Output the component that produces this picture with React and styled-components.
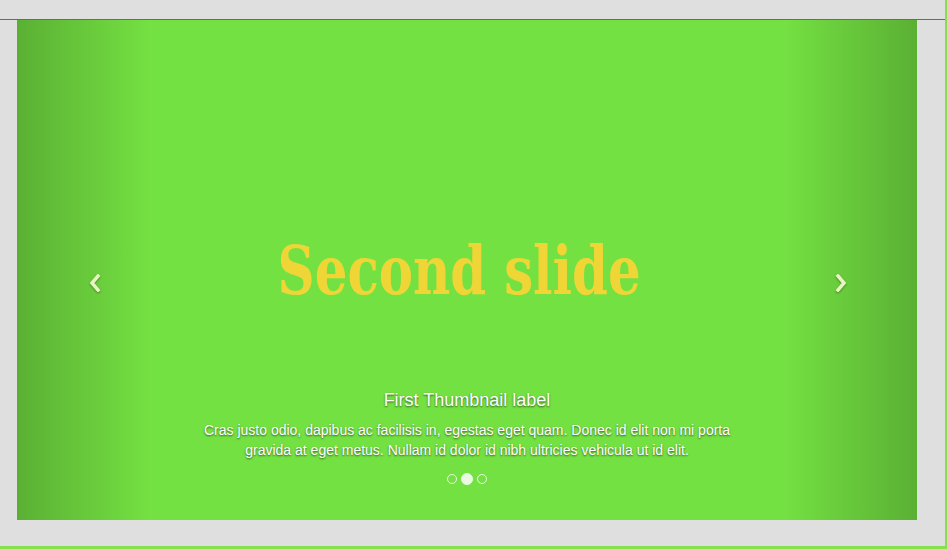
import React from "react";
import styled, { createGlobalStyle } from "styled-components";

const GlobalStyle = createGlobalStyle`
  html, body {
    margin: 0;
    padding: 0;
    background: #dfdfdf;
    font-family: "Liberation Sans", Arial, sans-serif;
  }
`;

const Page = styled.div`
  height: 546px;
  width: 945px;
  border-right: 2px solid #86e04e;
  border-bottom: 3px solid #86e04e;
`;

const TopBar = styled.div`
  height: 19px;
  border-bottom: 1px solid #6a6a6a;
`;

const Carousel = styled.div`
  position: relative;
  margin-left: 17px;
  width: 900px;
  height: 500px;
  background: #74e142;
  overflow: hidden;
  display: flex;
  align-items: center;
  justify-content: center;
`;

const Heading = styled.h1`
  margin: 0 16px 0 0;
  font-family: "DejaVu Serif Condensed", "DejaVu Serif", serif;
  font-weight: bold;
  font-size: 68px;
  color: #efd636;
  line-height: 1;
  transform: scaleX(0.84);
`;

const Control = styled.a`
  position: absolute;
  top: 0;
  bottom: 0;
  width: 15%;
  ${(p) => (p.$side === "left" ? "left: 0;" : "right: 0;")}
  background-image: linear-gradient(
    ${(p) => (p.$side === "left" ? "to right" : "to left")},
    rgba(0, 0, 0, 0.22) 0,
    rgba(0, 0, 0, 0.0001) 100%
  );
  display: flex;
  align-items: center;
  justify-content: ${(p) => (p.$side === "left" ? "flex-start" : "flex-end")};
  ${(p) => (p.$side === "left" ? "padding-left: 72px;" : "padding-right: 70px;")}
  box-sizing: border-box;
`;

const Chevron = styled.svg`
  width: 12px;
  height: 18px;
  margin-top: 26px;
  filter: drop-shadow(0 1px 1px rgba(0, 0, 0, 0.35));
`;

const Caption = styled.div`
  position: absolute;
  left: 20%;
  right: 20%;
  bottom: 20px;
  padding-bottom: 40px;
  text-align: center;
  color: #fff;
  text-shadow: 0 1px 2px rgba(0, 0, 0, 0.6);
`;

const CaptionTitle = styled.h3`
  margin: 0 0 9px;
  font-size: 18px;
  font-weight: normal;
  line-height: 22px;
`;

const CaptionText = styled.p`
  margin: 0;
  font-size: 14px;
  line-height: 20px;
`;

const Indicators = styled.ol`
  position: absolute;
  left: 0;
  right: 0;
  bottom: 35px;
  margin: 0;
  padding: 0;
  list-style: none;
  display: flex;
  align-items: center;
  justify-content: center;
  gap: 4px;
`;

const Dot = styled.li`
  box-sizing: border-box;
  width: ${(p) => (p.$active ? "12px" : "10px")};
  height: ${(p) => (p.$active ? "12px" : "10px")};
  border-radius: 50%;
  border: 1px solid #fff;
  background: ${(p) => (p.$active ? "#fff" : "transparent")};
  opacity: 0.85;
`;

const ChevronIcon = ({ left }) => (
  <Chevron viewBox="0 0 12 18">
    <path
      d={left ? "M9 2 L3 9 L9 16" : "M3 2 L9 9 L3 16"}
      fill="none"
      stroke="#e9f5c0"
      strokeWidth="3.5"
      strokeLinecap="square"
    />
  </Chevron>
);

export default function App() {
  return (
    <>
      <GlobalStyle />
      <Page>
        <TopBar />
        <Carousel>
          <Heading>Second slide</Heading>
          <Control $side="left">
            <ChevronIcon left />
          </Control>
          <Control $side="right">
            <ChevronIcon />
          </Control>
          <Caption>
            <CaptionTitle>First Thumbnail label</CaptionTitle>
            <CaptionText>
              Cras justo odio, dapibus ac facilisis in, egestas eget quam. Donec
              id elit non mi porta gravida at eget metus. Nullam id dolor id nibh
              ultricies vehicula ut id elit.
            </CaptionText>
          </Caption>
          <Indicators>
            <Dot />
            <Dot $active />
            <Dot />
          </Indicators>
        </Carousel>
      </Page>
    </>
  );
}
